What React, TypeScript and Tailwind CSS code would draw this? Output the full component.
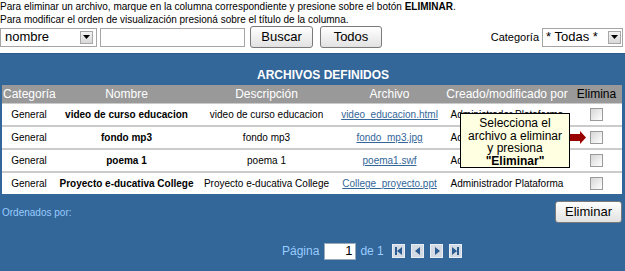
const rows = [
  { cat: "General", name: "video de curso educacion", desc: "video de curso educacion", file: "video_educacion.html" },
  { cat: "General", name: "fondo mp3", desc: "fondo mp3", file: "fondo_mp3.jpg" },
  { cat: "General", name: "poema 1", desc: "poema 1", file: "poema1.swf" },
  { cat: "General", name: "Proyecto e-ducativa College", desc: "Proyecto e-ducativa College", file: "College_proyecto.ppt" },
];

const cols = "grid grid-cols-[54px_141px_139px_107px_128px_51px]";

function DropArrow() {
  return (
    <span className="flex h-[13px] w-[13px] items-center justify-center border border-[#a8a8a8] bg-gradient-to-b from-[#f4f4f4] to-[#d8d8d8]">
      <svg width="7" height="4" viewBox="0 0 7 4">
        <path d="M0 0h7L3.5 4z" fill="#000" />
      </svg>
    </span>
  );
}

function XpButton({ label, className }: { label: string; className: string }) {
  return (
    <button
      type="button"
      className={`flex h-[22px] items-center justify-center rounded-[3px] border border-[#7a7a7a] bg-gradient-to-b from-white to-[#e2e2e2] text-[13px] text-black ${className}`}
    >
      {label}
    </button>
  );
}

function CheckBox() {
  return <span className="block h-[13px] w-[13px] border border-[#9a9a9a] bg-gradient-to-br from-[#d6d6d6] to-white" />;
}

function PageIcon({ kind }: { kind: "first" | "prev" | "next" | "last" }) {
  const glyph = {
    first: "M3 3h2v8H3zM10 3v8L5 7z",
    prev: "M9 3v8L4 7z",
    next: "M5 3v8l5-4z",
    last: "M3 3v8l5-4zM8 3h2v8H8z",
  }[kind];
  return (
    <span className="block h-[14px] w-[13px] border border-[#e8eef5] bg-[#d3dae3]">
      <svg width="11" height="12" viewBox="1 1 11 12">
        <path d={glyph} fill="#2b5d92" />
      </svg>
    </span>
  );
}

export default function App() {
  return (
    <div className="h-[271px] w-[625px] overflow-hidden bg-white font-['Liberation_Sans',Arial,sans-serif] text-black">
      <div className="text-[10px] leading-[13px]">
        <p>
          Para eliminar un archivo, marque en la columna correspondiente y presione sobre el botón <b>ELIMINAR</b>.
        </p>
        <p>Para modificar el orden de visualización presioná sobre el título de la columna.</p>
      </div>

      <div className="flex h-[22px] items-center">
        <div className="flex h-[19px] w-[97px] items-center justify-between border border-[#a5a5a5] bg-white pl-[4px] pr-[3px] text-[13px]">
          nombre
          <DropArrow />
        </div>
        <div className="ml-[3px] h-[19px] w-[145px] border border-[#a5a5a5] bg-white" />
        <XpButton label="Buscar" className="ml-[5px] w-[63px]" />
        <XpButton label="Todos" className="ml-[7px] w-[62px]" />
        <span className="ml-auto text-[11px]">Categoría</span>
        <div className="ml-[3px] mr-[2px] flex h-[19px] w-[81px] items-center justify-between border border-[#a5a5a5] bg-white pl-[3px] pr-[1px] text-[13px]">
          * Todas *
          <DropArrow />
        </div>
      </div>

      <div className="mt-[5px] h-[220px] border-t border-[#2a5a88] bg-[#336699] px-[2px]">
        <div className="flex h-[31px] items-end justify-center pb-[1px] pl-[21px] text-[12px] font-bold text-white">
          ARCHIVOS DEFINIDOS
        </div>

        <div className="relative w-[620px]">
          <div className={`${cols} h-[18px] items-center bg-[#999999] text-center text-[12px] text-white`}>
            <span className="text-left pl-[1px]">Categoría</span>
            <span>Nombre</span>
            <span>Descripción</span>
            <span>Archivo</span>
            <span>Creado/modificado por</span>
            <span className="text-black">Elimina</span>
          </div>
          <div className="flex flex-col gap-[2px] bg-[#cbcbcb] pt-[1px]">
            {rows.map((r) => (
              <div key={r.file} className={`${cols} h-[21px] items-center bg-white text-center text-[10px] whitespace-nowrap`}>
                <span>{r.cat}</span>
                <span className="font-bold">{r.name}</span>
                <span>{r.desc}</span>
                <span className="text-[#336699] underline">{r.file}</span>
                <span>Administrador Plataforma</span>
                <span className="flex justify-center">
                  <CheckBox />
                </span>
              </div>
            ))}
          </div>

          <div className="absolute left-[458px] top-[28px] flex h-[55px] w-[110px] flex-col items-center border border-black bg-[#ffffe1] pt-[3px] text-[12px] leading-[12.5px]">
            <span>Selecciona el</span>
            <span>archivo a eliminar</span>
            <span>y presiona</span>
            <span className="font-bold">"Eliminar"</span>
          </div>
          <svg className="absolute left-[568px] top-[46px]" width="16" height="13" viewBox="0 0 16 13">
            <path d="M0 3h10V0l6 6.5-6 6.5V10H0z" fill="#990000" />
          </svg>
        </div>

        <div className="flex items-center justify-between pt-[7px] pr-[1px]">
          <span className="text-[10px] text-[#99ccff]">Ordenados por:</span>
          <XpButton label="Eliminar" className="h-[21px] w-[67px]" />
        </div>

        <div className="mt-[19px] flex items-center pl-[280px] text-[12px] text-[#99ccff]">
          <span>Página</span>
          <span className="ml-[5px] flex h-[17px] w-[32px] items-center justify-end border border-[#9aa9b8] bg-white pr-[3px] text-[13px] text-black">
            1
          </span>
          <span className="ml-[4px]">de 1</span>
          <div className="ml-[8px] flex gap-[6px]">
            <PageIcon kind="first" />
            <PageIcon kind="prev" />
            <PageIcon kind="next" />
            <PageIcon kind="last" />
          </div>
        </div>
      </div>
    </div>
  );
}
